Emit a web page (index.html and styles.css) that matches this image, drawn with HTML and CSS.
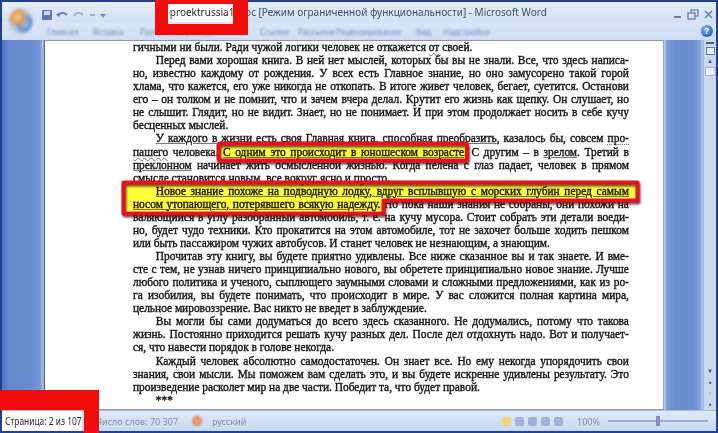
FILE: index.html
```html
<!DOCTYPE html>
<html lang="ru">
<head>
<meta charset="utf-8">
<title>proektrussia1.doc - Microsoft Word</title>
<link rel="stylesheet" href="styles.css">
</head>
<body>
<div class="window">
  <div class="titlebar">
    <div class="qat">
      <svg width="70" height="14" viewBox="0 0 70 14">
        <rect x="2" y="2" width="10" height="10" rx="1" fill="#3d5f9e"/>
        <rect x="4" y="3" width="6" height="4" fill="#c9d6ea"/>
        <path d="M18 8 q4 -6 9 -1" stroke="#4a68a6" stroke-width="2" fill="none"/>
        <path d="M16 6 l3 3 l1 -4z" fill="#4a68a6"/>
        <path d="M34 8 q4 -6 9 -1" stroke="#8fa3c6" stroke-width="2" fill="none"/>
        <rect x="50" y="6" width="5" height="2" fill="#8fa3c6"/>
        <path d="M60 6 h6 l-3 4z" fill="#5a73a6"/>
      </svg>
    </div>
    <div class="title"><span class="hl">proektrussia1</span>.doc [Режим ограниченной функциональности] - Microsoft Word</div>
    <div class="controls">
      <svg width="44" height="14" viewBox="0 0 44 14">
        <rect x="2" y="8" width="7" height="2" fill="#6d82a8"/>
        <rect x="19" y="2" width="7" height="6" fill="none" stroke="#6d82a8" stroke-width="1.3"/>
        <rect x="16" y="5" width="7" height="6" fill="#d9e5f6" stroke="#6d82a8" stroke-width="1.3"/>
        <path d="M33 3 l7 7 M40 3 l-7 7" stroke="#6d82a8" stroke-width="1.6"/>
      </svg>
    </div>
  </div>
  <div class="tabs">
    <span class="tab t1">Главная</span>
    <span class="tab t2">Вставка</span>
    <span class="tab t3">Разметка страницы</span>
    <span class="tab t4">Ссылки</span>
    <span class="tab t5">Рассылки</span>
    <span class="tab t6">Рецензирование</span>
    <span class="tab t7">Вид</span>
    <span class="tab t8">Надстройки</span>
    <span class="help">?</span>
  </div>
  <div class="main">
    <div class="gutter-left"></div>
    <div class="page">
      <div class="text">
        <div class="ln last">гичными ни были. Ради чужой логики человек не откажется <span class="w">от</span> своей.</div>
        <div class="ln ind">Перед вами хорошая книга. В ней нет мыслей, которых бы вы не знали. Все, что здесь написа-</div>
        <div class="ln">но, известно каждому от рождения. У всех есть Главное знание, но оно замусорено такой горой</div>
        <div class="ln">хлама, что кажется, его уже никогда не откопать. В итоге живет человек, бегает, суетится. Останови</div>
        <div class="ln">его – он толком и не помнит, что и зачем вчера делал. Крутит его жизнь как щепку. Он слушает, но</div>
        <div class="ln">не слышит. Глядит, но не видит. Знает, но не понимает. И при этом продолжает носить в себе кучу</div>
        <div class="ln last">бесценных мыслей.</div>
        <div class="ln ind"><span class="u">У каждого в жизни есть своя Главная книга, способная преобразить</span>, казалось бы, совсем <span class="d">про-</span></div>
        <div class="ln"><span class="w">пашего</span> человека. <span class="u">С одним это происходит в юношеском возрасте</span>. С другим – в <span class="u">зрелом</span>. Третий в</div>
        <div class="ln"><span class="u">преклонном</span> начинает жить осмысленной жизнью. Когда пелена с глаз падает, человек в прямом</div>
        <div class="ln last"><span class="u">смысле становится новым, все вокруг ясно и просто.</span></div>
        <div class="ln ind"><span class="u">Новое знание похоже на подводную лодку, вдруг всплывшую с морских глубин перед самым</span></div>
        <div class="ln"><span class="u">носом утопающего, потерявшего всякую надежду</span>. Но пока наши знания не собраны, они похожи на</div>
        <div class="ln">валяющийся в углу разобранный автомобиль, т. е. на кучу мусора. Стоит собрать эти детали воеди-</div>
        <div class="ln">но, будет чудо техники. Кто прокатится на этом автомобиле, тот не захочет больше ходить пешком</div>
        <div class="ln last">или быть пассажиром чужих автобусов. И станет человек не незнающим, а знающим.</div>
        <div class="ln ind">Прочитав эту книгу, вы будете приятно удивлены. Все ниже сказанное вы и так знаете. И вме-</div>
        <div class="ln">сте с тем, не узнав ничего принципиально нового, вы обретете принципиально новое знание. Лучше</div>
        <div class="ln">любого политика и ученого, сыплющего заумными словами и сложными предложениями, как из ро-</div>
        <div class="ln">га изобилия, вы будете понимать, что происходит в мире. У вас сложится полная картина мира,</div>
        <div class="ln last">цельное мировоззрение. Вас никто не введет в заблуждение.</div>
        <div class="ln ind">Вы могли бы сами додуматься до всего здесь сказанного. Не додумались, потому что такова</div>
        <div class="ln">жизнь. Постоянно приходится решать кучу разных дел. После дел отдохнуть надо. Вот и получает-</div>
        <div class="ln last">ся, что навести порядок в голове некогда.</div>
        <div class="ln ind">Каждый человек абсолютно самодостаточен. Он знает все. Но ему некогда упорядочить свои</div>
        <div class="ln">знания, свои мысли. Мы поможем вам сделать это, и вы будете искренне удивлены результату. Это</div>
        <div class="ln last">произведение расколет мир на две части. Победит та, что будет правой.</div>
        <div class="ln last ind">***</div>
      </div>
    </div>
    <div class="gutter-right"></div>
    <div class="scrollbar">
      <div class="sb-split"></div>
      <div class="sb-ruler"></div>
      <div class="sb-btn">&#9650;</div>
      <div class="sb-thumb"></div>
      <div class="sb-track"></div>
      <div class="sb-btn">&#9660;</div>
      <div class="sb-btn small">&#9679;</div>
      <div class="sb-btn small">&#9675;</div>
      <div class="sb-btn small">&#9679;</div>
    </div>
  </div>
  <div class="status">
    <div class="st-page"><span class="st-page-text">Страница: 2 из 107</span></div>
    <div class="st-item st-words">Число слов: 70 307</div>
    <div class="st-icon"></div>
    <div class="st-item">русский</div>
    <div class="st-spacer"></div>
    <div class="st-views">
      <span class="vb on"></span><span class="vb"></span><span class="vb"></span><span class="vb"></span><span class="vb"></span>
    </div>
    <div class="st-item st-zoom">100%</div>
    <div class="st-slider"><span class="knob"></span></div>
  </div>

  <div class="orb"></div>
  <svg class="marks" width="718" height="433" viewBox="0 0 718 433">
    <rect class="hlfill" x="221" y="146" width="244" height="12"/>
    <path class="hlfill" d="M126 185 H635 V198 H381 V211 H126 Z"/>
    <rect class="redline" x="218.5" y="143.5" width="248.5" height="17" rx="2"/>
    <path class="redline" d="M123.5 182.5 H637.5 V200.5 H383.5 V213.5 H123.5 Z"/>
  </svg>
  <div class="redbox rb-top"></div>
  <div class="redbox rb-bottom"></div>
</div>
</body>
</html>
```

FILE: styles.css
```css
* { box-sizing: border-box; }
html, body { margin: 0; padding: 0; }
body {
  width: 718px;
  height: 433px;
  overflow: hidden;
  background: #203d8c;
  font-family: "Noto Sans", "Open Sans", sans-serif;
}
.window {
  position: relative;
  width: 718px;
  height: 433px;
  border: 2px solid #22408f;
  display: flex;
  flex-direction: column;
  background: #d6e3f5;
}

/* title bar */
.titlebar {
  height: 20px;
  display: flex;
  align-items: center;
  background: linear-gradient(#e6eefa, #d3e1f4);
}
.qat {
  margin-left: 38px;
  width: 72px;
  height: 14px;
  filter: blur(0.7px);
  opacity: 0.8;
}
.title {
  margin-left: 56px;
  height: 20px;
  line-height: 20px;
  font-size: 11px;
  color: #3d4d66;
  white-space: nowrap;
  transform: scaleX(0.91);
  transform-origin: left center;
}
.hl {
  display: inline-block;
  background: #fff;
  color: #2a2a2a;
  padding: 0 2px 0 2px;
  height: 20px;
}
.controls {
  margin-left: auto;
  width: 44px;
  height: 14px;
}

/* ribbon tabs row */
.tabs {
  height: 18px;
  position: relative;
  background: linear-gradient(#dae6f7, #cfdef3);
  font-size: 8px;
  color: #7890b8;
}
.tab {
  position: absolute;
  top: 4px;
  filter: blur(0.9px);
  white-space: nowrap;
}
.t1 { left: 45px; }
.t2 { left: 91px; }
.t3 { left: 138px; }
.t4 { left: 258px; }
.t5 { left: 296px; }
.t6 { left: 334px; }
.t7 { left: 414px; }
.t8 { left: 441px; }
.help {
  position: absolute;
  left: 699px;
  top: 3px;
  width: 12px;
  height: 12px;
  border-radius: 50%;
  background: radial-gradient(circle at 40% 35%, #8fc0ff, #1f5fc8 70%, #17429a);
  color: #fff;
  font-size: 9px;
  font-weight: bold;
  line-height: 12px;
  text-align: center;
}

/* main area */
.main {
  height: 370px;
  display: flex;
}
.gutter-left {
  width: 42px;
  background: linear-gradient(to right, #4f74c2 0, #6688cc 6px, #6b8dd0 30px, #7897d6 38px, #aec2e8 41px, #7d9ad6 42px);
}
.page {
  width: 620px;
  background: #fff;
  border-left: 1px solid #5e6f8e;
  border-top: 1px solid #8a96ab;
  border-right: 1px solid #9aa7bf;
  border-bottom: 1px solid #8a96ab;
  height: 370px;
  overflow: hidden;
}
.text {
  margin-left: 88px;
  width: 522px;
  transform: scaleX(0.95);
  transform-origin: left top;
  font-family: "Liberation Serif", "Times New Roman", serif;
  font-size: 12px;
  line-height: 13.07px;
  color: #161616;
  -webkit-text-stroke: 0.4px #161616;
}
.ln {
  text-align: justify;
  text-align-last: justify;
  height: 13.07px;
  word-spacing: -1px;
}
.ln.last { text-align-last: left; word-spacing: 0; }
.ln.ind { text-indent: 24px; }
.u {
  text-decoration: underline;
  text-decoration-color: #777;
  text-decoration-thickness: 1px;
  text-underline-offset: 1px;
}
.w {
  text-decoration: underline wavy;
  text-decoration-color: #6c7a6c;
  text-decoration-thickness: 1px;
}
.d {
  text-decoration: underline dotted;
  text-decoration-color: #666;
}
.gutter-right {
  width: 39px;
  background: linear-gradient(to right, #c9d6ef 0, #7d9ad6 3px, #6b8dd0 10px, #6b8dd0 30px, #87a3dc 36px, #b9cbec 39px);
}
.scrollbar {
  width: 13px;
  display: flex;
  flex-direction: column;
  align-items: center;
  background: #cbdaf0;
  border-left: 1px solid #a5b9dd;
}
.sb-split {
  width: 8px;
  height: 2px;
  margin-top: 2px;
  background: #4a5f85;
}
.sb-ruler {
  width: 9px;
  height: 8px;
  margin-top: 3px;
  border: 1px solid #6b7fa6;
  background: #e8eef8;
}
.sb-btn {
  width: 12px;
  height: 12px;
  font-size: 6px;
  line-height: 12px;
  text-align: center;
  color: #3b4f78;
}
.sb-btn.small { font-size: 5px; height: 11px; line-height: 11px; }
.sb-thumb {
  width: 11px;
  height: 9px;
  background: linear-gradient(to right, #f2f6fc, #dfe8f6);
  border: 1px solid #9fb2d6;
}
.sb-track { flex: 1; }

/* status bar */
.status {
  height: 21px;
  display: flex;
  align-items: center;
  background: linear-gradient(#dfe9f7, #c8d9f1);
  border-top: 1px solid #a8bde0;
  font-size: 10px;
  color: #7d8fb0;
}
.st-page {
  width: 80px;
  height: 20px;
  line-height: 20px;
  background: #fff;
  padding-left: 3px;
  white-space: nowrap;
}
.st-page-text {
  display: inline-block;
  color: #2b2b2b;
  font-size: 10.5px;
  transform: scaleX(0.8);
  transform-origin: left center;
}
.st-item {
  filter: blur(0.7px);
  white-space: nowrap;
  font-size: 9px;
}
.st-words { margin-left: 14px; }
.st-icon {
  width: 10px;
  height: 10px;
  margin: 0 10px 0 14px;
  border-radius: 50%;
  background: radial-gradient(circle, #f7b27a, #e2683a);
  filter: blur(0.8px);
}
.st-spacer { flex: 1; }
.st-views {
  display: flex;
  gap: 4px;
  margin-right: 14px;
  filter: blur(0.6px);
}
.vb {
  width: 9px;
  height: 9px;
  background: #9fb3d6;
  border-radius: 2px;
}
.vb.on { background: #f4d27e; }
.st-zoom { margin-right: 8px; }
.st-slider {
  position: relative;
  width: 100px;
  height: 2px;
  margin-right: 8px;
  background: #9fb0cf;
  filter: blur(0.5px);
}
.knob {
  position: absolute;
  left: 48px;
  top: -4px;
  width: 4px;
  height: 10px;
  background: #7f93b8;
}

/* overlays */
.orb {
  position: absolute;
  left: 7px;
  top: 6px;
  width: 24px;
  height: 26px;
  border-radius: 50%;
  background:
    radial-gradient(circle at 35% 35%, #f6c9a0 0, #e99a5a 25%, transparent 45%),
    radial-gradient(circle at 65% 60%, #9cc3e8 0, #6a97cf 30%, transparent 50%),
    radial-gradient(circle at 50% 50%, #d8e4f2, #b8c9e0 70%, #c7d6ea);
  filter: blur(1.2px);
}
.marks {
  position: absolute;
  left: -2px;
  top: -2px;
  pointer-events: none;
}
.hlfill {
  fill: #ffff3a;
  mix-blend-mode: multiply;
}
.redline {
  fill: none;
  stroke: #e8101a;
  stroke-width: 4;
  stroke-linejoin: round;
  filter: drop-shadow(1.5px 2px 1.2px rgba(40, 0, 0, 0.7));
}
.redbox {
  position: absolute;
  border-style: solid;
  border-color: #f20d0d;
  pointer-events: none;
}
.rb-top {
  left: 153px;
  top: -2px;
  width: 93px;
  height: 35px;
  border-width: 4px 15px 11px 13px;
}
.rb-bottom {
  left: -2px;
  top: 388px;
  width: 99px;
  height: 47px;
  border-width: 20px 15px 0 0;
}
```
